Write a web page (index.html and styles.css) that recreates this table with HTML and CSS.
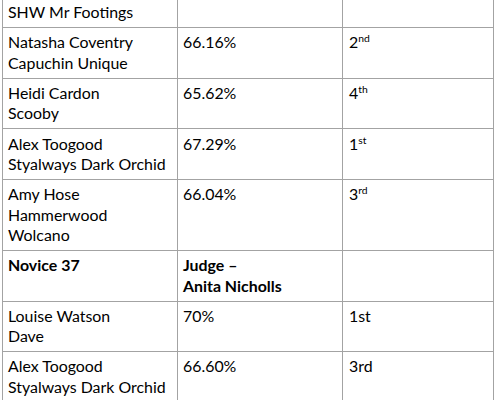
FILE: index.html
```html
<!DOCTYPE html>
<html>
<head>
<meta charset="utf-8">
<link rel="stylesheet" href="styles.css">
</head>
<body>
<table class="results">
  <colgroup>
    <col class="c-name">
    <col class="c-score">
    <col class="c-place">
  </colgroup>
  <tr><td>SHW Mr Footings</td><td></td><td></td></tr>
  <tr><td>Natasha Coventry<br>Capuchin Unique</td><td>66.16%</td><td>2<sup>nd</sup></td></tr>
  <tr><td>Heidi Cardon<br>Scooby</td><td>65.62%</td><td>4<sup>th</sup></td></tr>
  <tr><td>Alex Toogood<br>Styalways Dark Orchid</td><td>67.29%</td><td>1<sup>st</sup></td></tr>
  <tr><td>Amy Hose<br>Hammerwood<br>Wolcano</td><td>66.04%</td><td>3<sup>rd</sup></td></tr>
  <tr class="head"><td>Novice 37</td><td>Judge –<br>Anita Nicholls</td><td></td></tr>
  <tr><td>Louise Watson<br>Dave</td><td>70%</td><td>1st</td></tr>
  <tr><td>Alex Toogood<br>Styalways Dark Orchid</td><td>66.60%</td><td>3rd</td></tr>
</table>
</body>
</html>
```

FILE: styles.css
```css
html, body {
  margin: 0;
  padding: 0;
  background: #ffffff;
}
body {
  overflow: hidden;
}
.results {
  margin: -3px 0 0 2px;
  border-collapse: collapse;
  table-layout: fixed;
  width: 491px;
  font-family: Lato, "Open Sans", sans-serif;
  font-size: 15.9px;
  line-height: 20.5px;
  color: #000000;
}
.c-name { width: 175px; }
.c-score { width: 165px; }
.c-place { width: 151px; }
.results td {
  border: 1px solid #a3a3a3;
  padding: 4.3px 5px;
  vertical-align: top;
}
.results td:nth-child(3) {
  padding-left: 6px;
}
.head td {
  font-weight: bold;
}
.results sup {
  font-size: 0.65em;
  line-height: 0;
  vertical-align: 0.55em;
}
```
